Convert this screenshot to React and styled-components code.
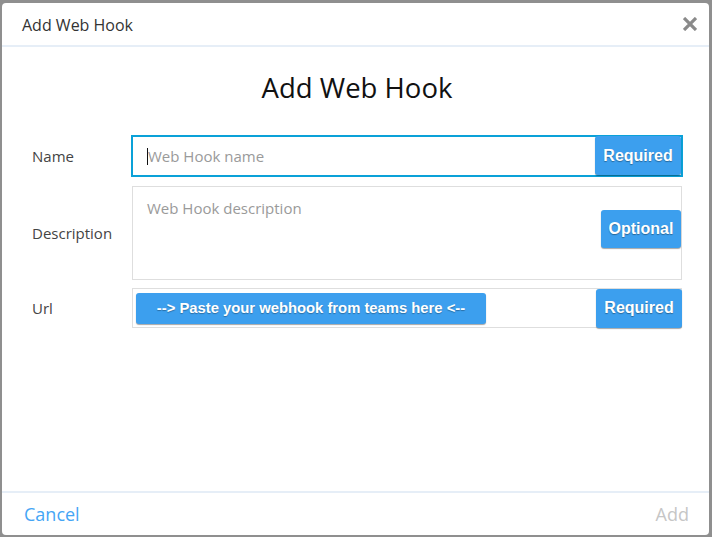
import React from "react";
import styled, { createGlobalStyle } from "styled-components";

const Global = createGlobalStyle`
  html, body { margin: 0; padding: 0; }
  body { background: #8f8f8f; font-family: "Open Sans", "Liberation Sans", sans-serif; }
  * { box-sizing: border-box; }
`;

const Backdrop = styled.div`
  width: 712px;
  height: 537px;
  padding: 3px 3px 2px 2px;
  background: #8f8f8f;
  overflow: hidden;
`;

const Dialog = styled.div`
  width: 100%;
  height: 100%;
  background: #fff;
  border-radius: 4px;
  display: flex;
  flex-direction: column;
`;

const Header = styled.div`
  height: 44px;
  border-bottom: 2px solid #e6eef7;
  display: flex;
  align-items: center;
  justify-content: space-between;
  padding: 0 10px 0 20px;
`;

const HeaderTitle = styled.div`
  font-size: 16px;
  color: #333;
  padding-top: 1px;
`;

const Close = styled.button`
  border: 0;
  background: none;
  padding: 0;
  width: 18px;
  height: 18px;
  display: flex;
  align-items: center;
  justify-content: center;
  cursor: pointer;
`;

const Body = styled.div`
  flex: 1;
  padding: 25px 27px 0 30px;
`;

const Title = styled.h1`
  margin: 0 0 31px;
  text-align: center;
  font-weight: 400;
  font-size: 27.5px;
  color: #111;
  line-height: 32px;
`;

const Row = styled.div`
  display: flex;
  align-items: center;
  margin-bottom: ${(p) => p.$gap}px;
`;

const Label = styled.div`
  width: 100px;
  font-size: 15px;
  color: #444;
`;

const Field = styled.div`
  flex: 1;
  height: ${(p) => p.$h}px;
  border: ${(p) => (p.$focus ? "2px solid #0aa1d8" : "1px solid #dedede")};
  margin: ${(p) => (p.$focus ? "0 -1px 0 -1px" : "0")};
  display: flex;
  align-items: ${(p) => p.$align || "center"};
  justify-content: space-between;
`;

const Placeholder = styled.div`
  font-size: 15px;
  color: #9a9a9a;
  padding-left: ${(p) => p.$pl}px;
  padding-top: ${(p) => p.$pt || 0}px;
  display: flex;
  align-items: center;
  align-self: ${(p) => p.$self || "center"};
`;

const Caret = styled.span`
  display: inline-block;
  width: 1px;
  height: 17px;
  background: #111;
`;

const Tag = styled.div`
  background: #3c9fee;
  color: #fff;
  font-family: "Liberation Sans", Arial, sans-serif;
  font-weight: 700;
  font-size: 16px;
  text-shadow: 0 1px 1px rgba(0, 0, 0, 0.35);
  border-radius: 3px;
  box-shadow: 0 1px 1px rgba(0, 0, 0, 0.35);
  width: ${(p) => p.$w}px;
  height: ${(p) => p.$h}px;
  display: flex;
  align-items: center;
  justify-content: center;
  align-self: ${(p) => p.$self || "center"};
  margin: ${(p) => p.$m || "0"};
`;

const PasteButton = styled.div`
  width: 350px;
  height: 31px;
  margin-left: 3px;
  background: #3c9fee;
  color: #fff;
  font-family: "Liberation Sans", Arial, sans-serif;
  font-weight: 700;
  font-size: 14.8px;
  text-shadow: 0 1px 1px rgba(0, 0, 0, 0.3);
  border-radius: 3px;
  box-shadow: 0 1px 1px rgba(0, 0, 0, 0.35);
  display: flex;
  align-items: center;
  justify-content: center;
`;

const Footer = styled.div`
  height: 44px;
  border-top: 2px solid #e6eef7;
  display: flex;
  align-items: center;
  justify-content: space-between;
  padding: 0 20px 0 22px;
`;

const FooterLink = styled.button`
  border: 0;
  background: none;
  padding: 0;
  font-family: "Open Sans", "Liberation Sans", sans-serif;
  font-size: 18px;
  color: ${(p) => (p.$disabled ? "#c6c6c6" : "#45a5f5")};
  cursor: pointer;
`;

export default function App() {
  return (
    <>
      <Global />
      <Backdrop>
        <Dialog>
          <Header>
            <HeaderTitle>Add Web Hook</HeaderTitle>
            <Close aria-label="Close">
              <svg width="14" height="14" viewBox="0 0 14 14">
                <path d="M1 1L13 13M13 1L1 13" stroke="#8a8a8a" strokeWidth="3.2" strokeLinecap="butt" />
              </svg>
            </Close>
          </Header>
          <Body>
            <Title>Add Web Hook</Title>
            <Row $gap={9}>
              <Label>Name</Label>
              <Field $h={42} $focus>
                <Placeholder $pl={14}>
                  <Caret />
                  Web Hook name
                </Placeholder>
                <Tag $w={86} $h={39} $self="flex-end">Required</Tag>
              </Field>
            </Row>
            <Row $gap={8}>
              <Label>Description</Label>
              <Field $h={94} $align="center">
                <Placeholder $pl={14} $self="flex-start" $pt={11}>Web Hook description</Placeholder>
                <Tag $w={80} $h={38} $m="0 0 9px 0">Optional</Tag>
              </Field>
            </Row>
            <Row $gap={0}>
              <Label>Url</Label>
              <Field $h={40}>
                <PasteButton>--&gt; Paste your webhook from teams here &lt;--</PasteButton>
                <Tag $w={86} $h={39} $m="0 -1px 0 0">Required</Tag>
              </Field>
            </Row>
          </Body>
          <Footer>
            <FooterLink>Cancel</FooterLink>
            <FooterLink $disabled>Add</FooterLink>
          </Footer>
        </Dialog>
      </Backdrop>
    </>
  );
}
